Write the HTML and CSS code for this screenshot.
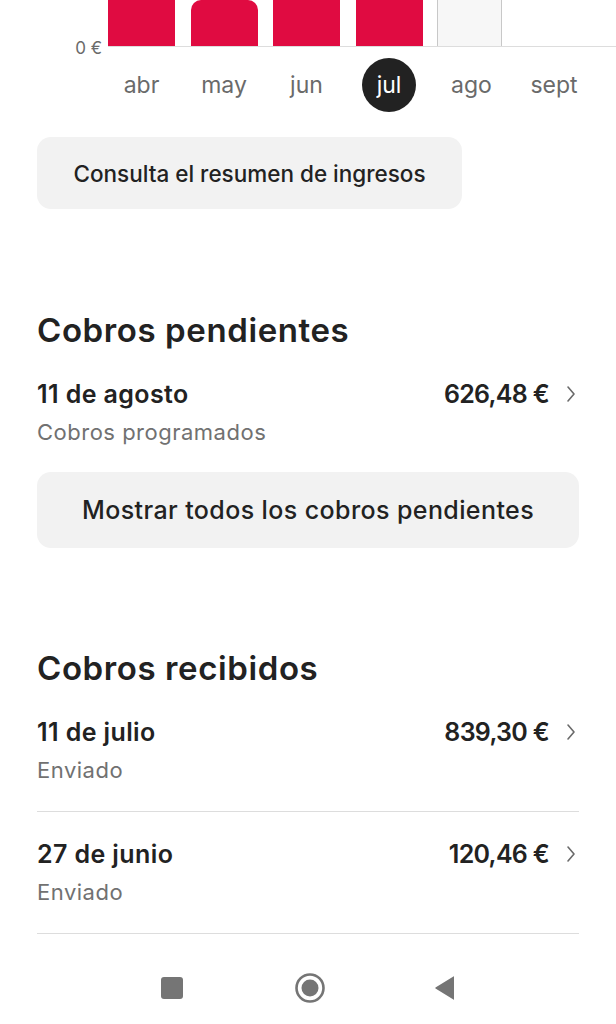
FILE: index.html
```html
<!DOCTYPE html>
<html lang="es">
<head>
<meta charset="utf-8">
<link rel="stylesheet" href="styles.css">
</head>
<body>
<div class="chart">
  <div class="axis-label">0 €</div>
  <div class="plot">
    <div class="bars">
      <div class="col"><div class="bar"></div></div>
      <div class="col"><div class="bar bar-short"></div></div>
      <div class="col"><div class="bar"></div></div>
      <div class="col"><div class="bar"></div></div>
      <div class="col"><div class="bar bar-future"></div></div>
      <div class="col"></div>
    </div>
    <div class="months">
      <div class="month">abr</div>
      <div class="month">may</div>
      <div class="month">jun</div>
      <div class="month"><span class="month-active">jul</span></div>
      <div class="month">ago</div>
      <div class="month">sept</div>
    </div>
  </div>
</div>

<main class="content">
  <button class="btn btn-summary">Consulta el resumen de ingresos</button>

  <h2 class="section-title first">Cobros pendientes</h2>
  <div class="row">
    <div class="row-main">
      <div class="row-title">11 de agosto</div>
      <div class="row-sub">Cobros programados</div>
    </div>
    <div class="row-amount">626,48 €</div>
    <svg class="chev" viewBox="0 0 10 18" width="10" height="18"><path d="M2 2 L8 9 L2 16" fill="none" stroke="#6a6a6a" stroke-width="1.6" stroke-linecap="round" stroke-linejoin="round"/></svg>
  </div>
  <button class="btn btn-full">Mostrar todos los cobros pendientes</button>

  <h2 class="section-title second">Cobros recibidos</h2>
  <div class="row row-divided">
    <div class="row-main">
      <div class="row-title">11 de julio</div>
      <div class="row-sub">Enviado</div>
    </div>
    <div class="row-amount">839,30 €</div>
    <svg class="chev" viewBox="0 0 10 18" width="10" height="18"><path d="M2 2 L8 9 L2 16" fill="none" stroke="#6a6a6a" stroke-width="1.6" stroke-linecap="round" stroke-linejoin="round"/></svg>
  </div>
  <div class="row row-divided">
    <div class="row-main">
      <div class="row-title">27 de junio</div>
      <div class="row-sub">Enviado</div>
    </div>
    <div class="row-amount">120,46 €</div>
    <svg class="chev" viewBox="0 0 10 18" width="10" height="18"><path d="M2 2 L8 9 L2 16" fill="none" stroke="#6a6a6a" stroke-width="1.6" stroke-linecap="round" stroke-linejoin="round"/></svg>
  </div>
</main>

<nav class="sysnav">
  <svg width="24" height="24" viewBox="0 0 24 24"><rect x="1" y="1" width="22" height="22" rx="3" fill="#757575"/></svg>
  <svg width="32" height="32" viewBox="0 0 32 32"><circle cx="16" cy="16" r="13.5" fill="none" stroke="#757575" stroke-width="2.6"/><circle cx="16" cy="16" r="8.5" fill="#757575"/></svg>
  <svg width="22" height="26" viewBox="0 0 22 26"><path d="M20 1.5 L20 24.5 Q20 25 19.4 24.6 L1.5 13.4 Q1 13 1.5 12.6 L19.4 1.4 Q20 1 20 1.5 Z" fill="#757575"/></svg>
</nav>
</body>
</html>
```

FILE: styles.css
```css
* { box-sizing: border-box; }
html, body { margin: 0; padding: 0; background: #fff; }
body {
  font-family: Inter, "Noto Sans", "Liberation Sans", sans-serif;
  color: #222222;
  width: 616px;
  overflow: hidden;
}

/* chart */
.chart {
  display: flex;
  align-items: flex-start;
}
.axis-label {
  width: 108px;
  padding-right: 6px;
  text-align: right;
  font-size: 17px;
  line-height: 18px;
  color: #6a6a6a;
  padding-top: 39px;
}
.plot { flex: 1; }
.bars {
  height: 47px;
  display: grid;
  grid-template-columns: repeat(6, 82.5px);
  align-items: end;
  border-bottom: 1px solid #dddddd;
  overflow: hidden;
}
.col { height: 46px; display: flex; align-items: flex-end; }
.bar {
  width: 67px;
  height: 60px;
  background: #e00b41;
}
.bar-short {
  height: 46px;
  border-radius: 10px 10px 0 0;
}
.bar-future {
  height: 60px;
  background: #f7f7f7;
  border-left: 1px solid #c8c8c8;
  border-right: 1px solid #c8c8c8;
  width: 65px;
  margin-left: -1px;
}
.months {
  display: grid;
  grid-template-columns: repeat(6, 82.5px);
  margin-top: 11px;
  height: 54px;
}
.month {
  width: 67px;
  display: flex;
  align-items: center;
  justify-content: center;
  font-size: 23px;
  color: #6a6a6a;
}
.month-active {
  width: 54px;
  height: 54px;
  border-radius: 50%;
  background: #222222;
  color: #ffffff;
  display: flex;
  align-items: center;
  justify-content: center;
}

/* content */
.content {
  padding: 0 37px;
  display: flex;
  flex-direction: column;
  align-items: flex-start;
}
.btn {
  font-family: inherit;
  border: none;
  background: #f2f2f2;
  color: #222222;
  border-radius: 14px;
  cursor: pointer;
}
.btn-summary {
  margin-top: 25px;
  height: 72px;
  width: 425px;
  font-size: 22.5px;
  font-weight: 500;
}
.btn-full {
  margin-top: 25px;
  height: 76px;
  width: 100%;
  font-size: 25px;
  font-weight: 500;
  letter-spacing: 0.4px;
}
.section-title {
  margin: 0;
  font-size: 33px;
  line-height: 40px;
  font-weight: 600;
  letter-spacing: 0.6px;
}
.section-title.first { margin-top: 101px; }
.section-title.second { margin-top: 100px; }

.row {
  width: 100%;
  display: flex;
  align-items: flex-start;
  margin-top: 28px;
}
.row-divided {
  padding-bottom: 26px;
  border-bottom: 1px solid #dddddd;
}
.row-divided + .row-divided { margin-top: 26px; }
.row-main { flex: 1; }
.row-title {
  font-size: 25px;
  line-height: 32px;
  font-weight: 600;
  letter-spacing: 0.4px;
}
.row-sub {
  margin-top: 7px;
  font-size: 22px;
  line-height: 30px;
  color: #717171;
  letter-spacing: 0.5px;
}
.row-amount {
  font-size: 25px;
  line-height: 32px;
  font-weight: 600;
  letter-spacing: -0.7px;
}
.chev {
  margin-left: 17px;
  margin-top: 7px;
  margin-right: 3px;
}

/* system nav */
.sysnav {
  margin-top: 26px;
  height: 56px;
  display: flex;
  align-items: center;
  justify-content: center;
}
.sysnav svg:nth-child(1) { margin-right: 110px; }
.sysnav svg:nth-child(2) { margin-right: 108px; }
```
